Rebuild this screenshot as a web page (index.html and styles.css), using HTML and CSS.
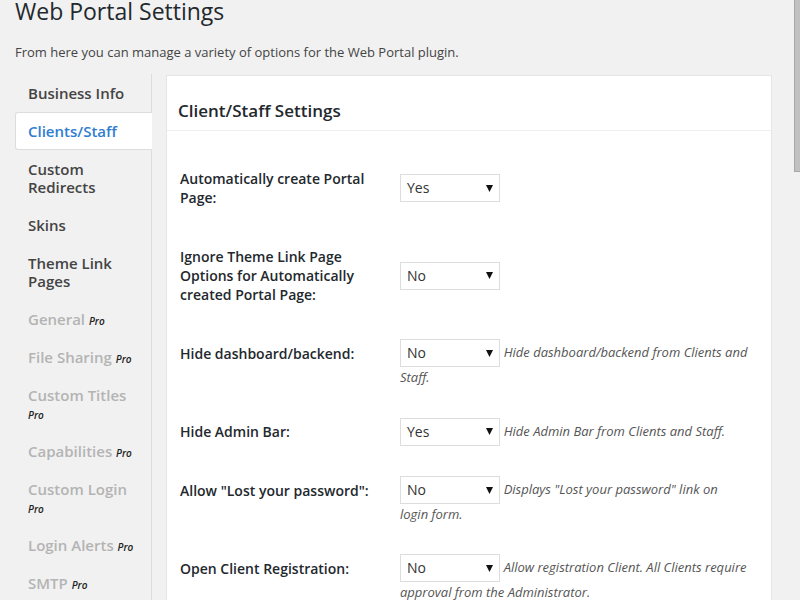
FILE: index.html
```html
<!DOCTYPE html>
<html lang="en">
<head>
<meta charset="utf-8">
<title>Web Portal Settings</title>
<link rel="stylesheet" href="styles.css">
</head>
<body>
<div class="wrap">
  <h1 class="page-title">Web Portal Settings</h1>
  <p class="intro">From here you can manage a variety of options for the Web Portal plugin.</p>
  <div class="layout">
    <ul class="tabs">
      <li><a class="tab">Business Info</a></li>
      <li><a class="tab active">Clients/Staff</a></li>
      <li><a class="tab">Custom Redirects</a></li>
      <li><a class="tab">Skins</a></li>
      <li><a class="tab">Theme Link Pages</a></li>
      <li><a class="tab disabled">General <em class="pro">Pro</em></a></li>
      <li><a class="tab disabled">File Sharing <em class="pro">Pro</em></a></li>
      <li><a class="tab disabled">Custom Titles <em class="pro">Pro</em></a></li>
      <li><a class="tab disabled">Capabilities <em class="pro">Pro</em></a></li>
      <li><a class="tab disabled">Custom Login <em class="pro">Pro</em></a></li>
      <li><a class="tab disabled">Login Alerts <em class="pro">Pro</em></a></li>
      <li><a class="tab disabled">SMTP <em class="pro">Pro</em></a></li>
    </ul>
    <div class="panel">
      <h2 class="panel-title">Client/Staff Settings</h2>
      <div class="panel-body">
        <table class="form-table">
          <tr>
            <th>Automatically create Portal Page:</th>
            <td><span class="select"><span class="select-value">Yes</span><svg class="arrow" width="7" height="7" viewBox="0 0 7 7"><path d="M0 0H7L3.5 7Z"/></svg></span></td>
          </tr>
          <tr>
            <th>Ignore Theme Link Page Options for Automatically created Portal Page:</th>
            <td><span class="select"><span class="select-value">No</span><svg class="arrow" width="7" height="7" viewBox="0 0 7 7"><path d="M0 0H7L3.5 7Z"/></svg></span></td>
          </tr>
          <tr>
            <th>Hide dashboard/backend:</th>
            <td><span class="select"><span class="select-value">No</span><svg class="arrow" width="7" height="7" viewBox="0 0 7 7"><path d="M0 0H7L3.5 7Z"/></svg></span> <span class="description">Hide dashboard/backend from Clients and Staff.</span></td>
          </tr>
          <tr>
            <th>Hide Admin Bar:</th>
            <td><span class="select"><span class="select-value">Yes</span><svg class="arrow" width="7" height="7" viewBox="0 0 7 7"><path d="M0 0H7L3.5 7Z"/></svg></span> <span class="description">Hide Admin Bar from Clients and Staff.</span></td>
          </tr>
          <tr>
            <th>Allow "Lost your password":</th>
            <td><span class="select"><span class="select-value">No</span><svg class="arrow" width="7" height="7" viewBox="0 0 7 7"><path d="M0 0H7L3.5 7Z"/></svg></span> <span class="description">Displays "Lost your password" link on login form.</span></td>
          </tr>
          <tr>
            <th>Open Client Registration:</th>
            <td><span class="select"><span class="select-value">No</span><svg class="arrow" width="7" height="7" viewBox="0 0 7 7"><path d="M0 0H7L3.5 7Z"/></svg></span> <span class="description">Allow registration Client. All Clients require approval from the Administrator.</span></td>
          </tr>
        </table>
      </div>
    </div>
  </div>
</div>
<div class="scrollbar"></div>
</body>
</html>
```

FILE: styles.css
```css
html, body {
  margin: 0;
  padding: 0;
  height: 600px;
  overflow: hidden;
  background: #f1f1f1;
}

body {
  font-family: "Open Sans", "Liberation Sans", sans-serif;
  color: #444;
  font-size: 13px;
}

.wrap {
  padding: 0 28px 0 15px;
}

.page-title {
  margin: 0;
  font-size: 23px;
  line-height: 22px;
  font-weight: 400;
  color: #23282d;
}

.intro {
  margin: 21px 0 0;
  font-size: 13px;
  line-height: 18px;
  color: #444;
}

.layout {
  display: flex;
  align-items: flex-start;
  margin-top: 13px;
}

.tabs {
  list-style: none;
  margin: 0;
  padding: 0;
  width: 136px;
  flex: 0 0 136px;
  border-right: 1px solid #ddd;
  min-height: 560px;
}

.tabs li {
  margin: 0;
}

.tab {
  display: block;
  padding: 9px 12px;
  border: 1px solid transparent;
  border-right: 0;
  font-size: 15px;
  line-height: 18px;
  font-weight: 600;
  color: #444;
}

.tab.active {
  background: #fff;
  border-color: #ddd;
  border-radius: 3px 0 0 3px;
  margin-right: -1px;
  color: #2e7dd1;
}

.tab.disabled {
  color: #b4b4b4;
}

.pro {
  font-size: 10px;
  line-height: 10px;
  font-style: italic;
  font-weight: 600;
  color: #222;
}

.panel {
  flex: 1;
  margin: 1px 0 0 14px;
  background: #fff;
  border: 1px solid #e5e5e5;
  min-height: 560px;
}

.panel-title {
  margin: 0;
  padding: 25px 11px 9px;
  font-size: 17px;
  line-height: 20px;
  font-weight: 600;
  color: #23282d;
  border-bottom: 1px solid #eee;
}

.panel-body {
  padding: 18px 13px 0 13px;
}

.form-table {
  width: 100%;
  border-collapse: collapse;
  border-spacing: 0;
}

.form-table th {
  width: 200px;
  padding: 20px 10px 20px 0;
  text-align: left;
  vertical-align: top;
  font-size: 14px;
  line-height: 19px;
  font-weight: 600;
  color: #23282d;
}

.form-table td {
  padding: 15px 10px;
  vertical-align: middle;
  font-size: 14px;
  line-height: 20px;
}

.select {
  display: inline-flex;
  align-items: center;
  justify-content: space-between;
  box-sizing: border-box;
  width: 100px;
  height: 28px;
  padding: 0 6px 0 6px;
  border: 1px solid #ddd;
  background: #fff;
  color: #333;
  font-size: 14px;
  vertical-align: middle;
}

.select-value {
  line-height: 26px;
}

.arrow {
  fill: #111;
}

.description {
  font-size: 13px;
  font-style: italic;
  color: #555;
  line-height: 20px;
}

.scrollbar {
  position: fixed;
  top: 0;
  right: 0;
  width: 5px;
  height: 171px;
  background: #c1c1c1;
  border-left: 1px solid #a8a8a8;
  border-bottom: 1px solid #a8a8a8;
}
```
